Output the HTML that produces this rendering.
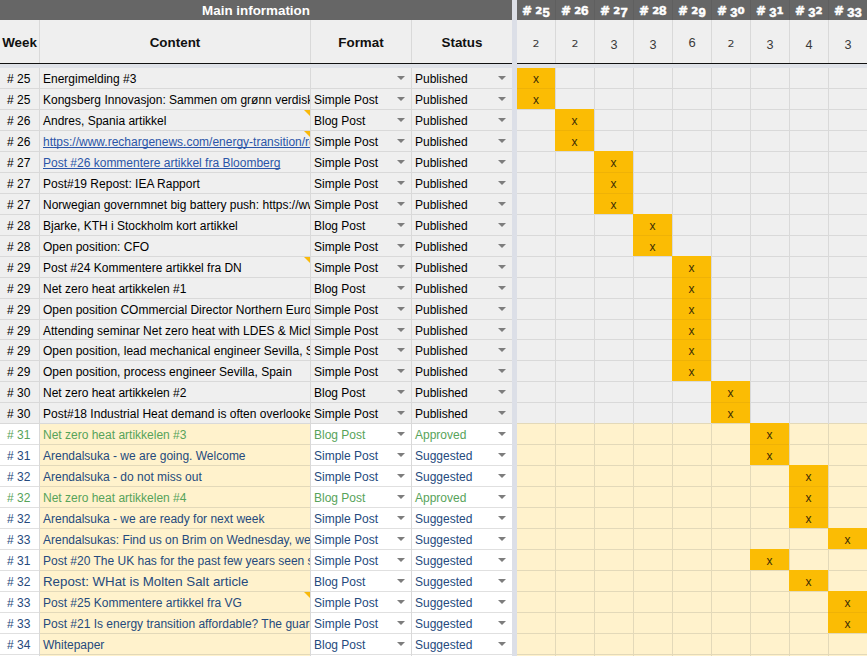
<!DOCTYPE html><html><head><meta charset="utf-8"><title>Content plan</title><style>
*{box-sizing:border-box;margin:0;padding:0}
html,body{width:867px;height:656px;overflow:hidden;background:#efefef}
body{font-family:"Liberation Sans",Arial,sans-serif;font-size:12px;color:#000;position:relative}
.a{position:absolute;white-space:nowrap;overflow:hidden}
.h1{background:#666;color:#fff;font-weight:bold;font-size:13.4px;text-align:center;line-height:22px;top:0;height:20px}
.wk{position:absolute;top:0;height:20px;width:30px;color:#fff;font-weight:bold}
.wk span{-webkit-text-stroke:.5px #fff;position:absolute;white-space:nowrap;line-height:1;transform-origin:0 0}
.h2{background:#efefef;font-weight:bold;font-size:13.4px;text-align:center;line-height:45px;top:20px;height:43px;color:#111}
.cnt{position:absolute;text-align:center;width:38px;color:#3a3a3a;white-space:nowrap;line-height:1}
.vl{position:absolute;width:1px;background:#d9d9d9}
.hl{position:absolute;height:1px;background:#d9d9d9}
.c{line-height:22px;height:20px}
.k{color:#000}.g{color:#57a35a}.b,.B{color:#254a7d}.l{color:#2a55a8;text-decoration:underline;text-decoration-skip-ink:none}
.B{font-size:13.3px}
.x{background:#fbbc04;text-align:center;color:#3b2d05;line-height:22px;font-size:12px}
.tri{position:absolute;width:0;height:0;border-left:6px solid transparent;border-top:6px solid #f9b90a}
.dd{position:absolute;width:0;height:0;border-left:4px solid transparent;border-right:4px solid transparent;border-top:4px solid #7d7d7d}
</style></head><body>
<div class="a h1" style="left:0;width:512px">Main information</div>
<div class="a" style="left:517px;top:0;width:350px;height:20px;background:#666"></div>
<div class="wk" style="left:522px"><span style="left:-0.1px;top:4.8px;font-family:'DejaVu Sans',sans-serif;font-size:12px;transform:scale(1,.97)">#</span><span style="left:13.2px;top:6.7px;font-family:'DejaVu Sans',sans-serif;font-size:10.2px;transform:scale(1,.92)">2</span><span style="left:20.4px;top:5.7px;font-size:13px;transform:scale(1,.98)">5</span></div>
<div class="wk" style="left:561px"><span style="left:-0.1px;top:4.8px;font-family:'DejaVu Sans',sans-serif;font-size:12px;transform:scale(1,.97)">#</span><span style="left:13.2px;top:6.7px;font-family:'DejaVu Sans',sans-serif;font-size:10.2px;transform:scale(1,.92)">2</span><span style="left:20.4px;top:3.6px;font-size:13.2px;transform:scale(1.02,.99)">6</span></div>
<div class="wk" style="left:600px"><span style="left:-0.1px;top:4.8px;font-family:'DejaVu Sans',sans-serif;font-size:12px;transform:scale(1,.97)">#</span><span style="left:13.2px;top:6.7px;font-family:'DejaVu Sans',sans-serif;font-size:10.2px;transform:scale(1,.92)">2</span><span style="left:20.4px;top:5.7px;font-size:13px;transform:scale(1,.98)">7</span></div>
<div class="wk" style="left:639px"><span style="left:-0.1px;top:4.8px;font-family:'DejaVu Sans',sans-serif;font-size:12px;transform:scale(1,.97)">#</span><span style="left:13.2px;top:6.7px;font-family:'DejaVu Sans',sans-serif;font-size:10.2px;transform:scale(1,.92)">2</span><span style="left:20.4px;top:3.6px;font-size:13.2px;transform:scale(1.02,.99)">8</span></div>
<div class="wk" style="left:678px"><span style="left:-0.1px;top:4.8px;font-family:'DejaVu Sans',sans-serif;font-size:12px;transform:scale(1,.97)">#</span><span style="left:13.2px;top:6.7px;font-family:'DejaVu Sans',sans-serif;font-size:10.2px;transform:scale(1,.92)">2</span><span style="left:20.4px;top:5.7px;font-size:13px;transform:scale(1,.98)">9</span></div>
<div class="wk" style="left:717px"><span style="left:-0.1px;top:4.8px;font-family:'DejaVu Sans',sans-serif;font-size:12px;transform:scale(1,.97)">#</span><span style="left:13.2px;top:5.7px;font-size:13px;transform:scale(1,.98)">3</span><span style="left:20.4px;top:6.7px;font-family:'DejaVu Sans',sans-serif;font-size:10.2px;transform:scale(1,.92)">0</span></div>
<div class="wk" style="left:756px"><span style="left:-0.1px;top:4.8px;font-family:'DejaVu Sans',sans-serif;font-size:12px;transform:scale(1,.97)">#</span><span style="left:13.2px;top:5.7px;font-size:13px;transform:scale(1,.98)">3</span><span style="left:20.4px;top:6.7px;font-family:'DejaVu Sans',sans-serif;font-size:10.2px;transform:scale(1,.92)">1</span></div>
<div class="wk" style="left:795px"><span style="left:-0.1px;top:4.8px;font-family:'DejaVu Sans',sans-serif;font-size:12px;transform:scale(1,.97)">#</span><span style="left:13.2px;top:5.7px;font-size:13px;transform:scale(1,.98)">3</span><span style="left:20.4px;top:6.7px;font-family:'DejaVu Sans',sans-serif;font-size:10.2px;transform:scale(1,.92)">2</span></div>
<div class="wk" style="left:834px"><span style="left:-0.1px;top:4.8px;font-family:'DejaVu Sans',sans-serif;font-size:12px;transform:scale(1,.97)">#</span><span style="left:13.2px;top:5.7px;font-size:13px;transform:scale(1,.98)">3</span><span style="left:20.4px;top:5.7px;font-size:13px;transform:scale(1,.98)">3</span></div>
<div class="a h2" style="left:0px;width:39px">Week</div>
<div class="a h2" style="left:40px;width:270px">Content</div>
<div class="a h2" style="left:311px;width:100px">Format</div>
<div class="a h2" style="left:412px;width:100px">Status</div>
<div class="cnt" style="left:517px;top:38.6px;font-family:'DejaVu Sans',sans-serif;font-size:10px;transform:scale(1.1,.95)">2</div>
<div class="cnt" style="left:556px;top:38.6px;font-family:'DejaVu Sans',sans-serif;font-size:10px;transform:scale(1.1,.95)">2</div>
<div class="cnt" style="left:595px;top:39.2px;font-size:12.6px">3</div>
<div class="cnt" style="left:634px;top:39.2px;font-size:12.6px">3</div>
<div class="cnt" style="left:673px;top:35.6px;font-size:13px">6</div>
<div class="cnt" style="left:712px;top:38.6px;font-family:'DejaVu Sans',sans-serif;font-size:10px;transform:scale(1.1,.95)">2</div>
<div class="cnt" style="left:751px;top:39.2px;font-size:12.6px">3</div>
<div class="cnt" style="left:790px;top:39.2px;font-size:12.6px">4</div>
<div class="cnt" style="left:829px;top:39.2px;font-size:12.6px">3</div>
<div class="a" style="left:0;top:424px;width:39px;height:232px;background:#fff"></div>
<div class="a" style="left:40px;top:424px;width:271px;height:232px;background:#fff2cc"></div>
<div class="a" style="left:311px;top:424px;width:201px;height:232px;background:#fff"></div>
<div class="a" style="left:517px;top:424px;width:350px;height:232px;background:#fff2cc"></div>
<div class="hl" style="left:0;top:88px;width:867px"></div>
<div class="hl" style="left:0;top:109px;width:867px"></div>
<div class="hl" style="left:0;top:130px;width:867px"></div>
<div class="hl" style="left:0;top:151px;width:867px"></div>
<div class="hl" style="left:0;top:172px;width:867px"></div>
<div class="hl" style="left:0;top:193px;width:867px"></div>
<div class="hl" style="left:0;top:214px;width:867px"></div>
<div class="hl" style="left:0;top:235px;width:867px"></div>
<div class="hl" style="left:0;top:256px;width:867px"></div>
<div class="hl" style="left:0;top:277px;width:867px"></div>
<div class="hl" style="left:0;top:298px;width:867px"></div>
<div class="hl" style="left:0;top:319px;width:867px"></div>
<div class="hl" style="left:0;top:339px;width:867px"></div>
<div class="hl" style="left:0;top:360px;width:867px"></div>
<div class="hl" style="left:0;top:381px;width:867px"></div>
<div class="hl" style="left:0;top:402px;width:867px"></div>
<div class="hl" style="left:0;top:423px;width:512px"></div>
<div class="hl" style="left:517px;top:423px;width:350px;background:#e3d9b9"></div>
<div class="hl" style="left:0;top:444px;width:39px;background:#e0e0e0"></div>
<div class="hl" style="left:40px;top:444px;width:270px;background:#e3d9b9"></div>
<div class="hl" style="left:311px;top:444px;width:201px;background:#e0e0e0"></div>
<div class="hl" style="left:517px;top:444px;width:350px;background:#e3d9b9"></div>
<div class="hl" style="left:0;top:465px;width:39px;background:#e0e0e0"></div>
<div class="hl" style="left:40px;top:465px;width:270px;background:#e3d9b9"></div>
<div class="hl" style="left:311px;top:465px;width:201px;background:#e0e0e0"></div>
<div class="hl" style="left:517px;top:465px;width:350px;background:#e3d9b9"></div>
<div class="hl" style="left:0;top:486px;width:39px;background:#e0e0e0"></div>
<div class="hl" style="left:40px;top:486px;width:270px;background:#e3d9b9"></div>
<div class="hl" style="left:311px;top:486px;width:201px;background:#e0e0e0"></div>
<div class="hl" style="left:517px;top:486px;width:350px;background:#e3d9b9"></div>
<div class="hl" style="left:0;top:507px;width:39px;background:#e0e0e0"></div>
<div class="hl" style="left:40px;top:507px;width:270px;background:#e3d9b9"></div>
<div class="hl" style="left:311px;top:507px;width:201px;background:#e0e0e0"></div>
<div class="hl" style="left:517px;top:507px;width:350px;background:#e3d9b9"></div>
<div class="hl" style="left:0;top:528px;width:39px;background:#e0e0e0"></div>
<div class="hl" style="left:40px;top:528px;width:270px;background:#e3d9b9"></div>
<div class="hl" style="left:311px;top:528px;width:201px;background:#e0e0e0"></div>
<div class="hl" style="left:517px;top:528px;width:350px;background:#e3d9b9"></div>
<div class="hl" style="left:0;top:549px;width:39px;background:#e0e0e0"></div>
<div class="hl" style="left:40px;top:549px;width:270px;background:#e3d9b9"></div>
<div class="hl" style="left:311px;top:549px;width:201px;background:#e0e0e0"></div>
<div class="hl" style="left:517px;top:549px;width:350px;background:#e3d9b9"></div>
<div class="hl" style="left:0;top:570px;width:39px;background:#e0e0e0"></div>
<div class="hl" style="left:40px;top:570px;width:270px;background:#e3d9b9"></div>
<div class="hl" style="left:311px;top:570px;width:201px;background:#e0e0e0"></div>
<div class="hl" style="left:517px;top:570px;width:350px;background:#e3d9b9"></div>
<div class="hl" style="left:0;top:591px;width:39px;background:#e0e0e0"></div>
<div class="hl" style="left:40px;top:591px;width:270px;background:#e3d9b9"></div>
<div class="hl" style="left:311px;top:591px;width:201px;background:#e0e0e0"></div>
<div class="hl" style="left:517px;top:591px;width:350px;background:#e3d9b9"></div>
<div class="hl" style="left:0;top:612px;width:39px;background:#e0e0e0"></div>
<div class="hl" style="left:40px;top:612px;width:270px;background:#e3d9b9"></div>
<div class="hl" style="left:311px;top:612px;width:201px;background:#e0e0e0"></div>
<div class="hl" style="left:517px;top:612px;width:350px;background:#e3d9b9"></div>
<div class="hl" style="left:0;top:633px;width:39px;background:#e0e0e0"></div>
<div class="hl" style="left:40px;top:633px;width:270px;background:#e3d9b9"></div>
<div class="hl" style="left:311px;top:633px;width:201px;background:#e0e0e0"></div>
<div class="hl" style="left:517px;top:633px;width:350px;background:#e3d9b9"></div>
<div class="hl" style="left:0;top:654px;width:39px;background:#e0e0e0"></div>
<div class="hl" style="left:40px;top:654px;width:270px;background:#e3d9b9"></div>
<div class="hl" style="left:311px;top:654px;width:201px;background:#e0e0e0"></div>
<div class="hl" style="left:517px;top:654px;width:350px;background:#e3d9b9"></div>
<div class="vl" style="left:39px;top:20px;height:636px"></div>
<div class="vl" style="left:310px;top:20px;height:636px"></div>
<div class="vl" style="left:411px;top:20px;height:636px"></div>
<div class="vl" style="left:555px;top:0;height:20px;background:#5f5f5f"></div>
<div class="vl" style="left:555px;top:20px;height:404px"></div>
<div class="vl" style="left:555px;top:424px;height:232px;background:#e3d9b9"></div>
<div class="vl" style="left:594px;top:0;height:20px;background:#5f5f5f"></div>
<div class="vl" style="left:594px;top:20px;height:404px"></div>
<div class="vl" style="left:594px;top:424px;height:232px;background:#e3d9b9"></div>
<div class="vl" style="left:633px;top:0;height:20px;background:#5f5f5f"></div>
<div class="vl" style="left:633px;top:20px;height:404px"></div>
<div class="vl" style="left:633px;top:424px;height:232px;background:#e3d9b9"></div>
<div class="vl" style="left:672px;top:0;height:20px;background:#5f5f5f"></div>
<div class="vl" style="left:672px;top:20px;height:404px"></div>
<div class="vl" style="left:672px;top:424px;height:232px;background:#e3d9b9"></div>
<div class="vl" style="left:711px;top:0;height:20px;background:#5f5f5f"></div>
<div class="vl" style="left:711px;top:20px;height:404px"></div>
<div class="vl" style="left:711px;top:424px;height:232px;background:#e3d9b9"></div>
<div class="vl" style="left:750px;top:0;height:20px;background:#5f5f5f"></div>
<div class="vl" style="left:750px;top:20px;height:404px"></div>
<div class="vl" style="left:750px;top:424px;height:232px;background:#e3d9b9"></div>
<div class="vl" style="left:789px;top:0;height:20px;background:#5f5f5f"></div>
<div class="vl" style="left:789px;top:20px;height:404px"></div>
<div class="vl" style="left:789px;top:424px;height:232px;background:#e3d9b9"></div>
<div class="vl" style="left:828px;top:0;height:20px;background:#5f5f5f"></div>
<div class="vl" style="left:828px;top:20px;height:404px"></div>
<div class="vl" style="left:828px;top:424px;height:232px;background:#e3d9b9"></div>
<div class="a" style="left:0;top:63px;width:867px;height:1px;background:#111"></div>
<div class="a" style="left:0;top:64px;width:867px;height:4px;background:#dfe2e8"></div>
<div class="a" style="left:512px;top:0;width:5px;height:656px;background:#dcdfe7"></div>
<div class="a c k" style="left:0;top:68px;width:39px;padding-left:7px"># 25</div>
<div class="a c k" style="left:40px;top:68px;width:270px;padding-left:3px">Energimelding #3</div>
<div class="dd" style="left:397px;top:76px"></div>
<div class="a c k" style="left:412px;top:68px;width:84px;padding-left:3px">Published</div>
<div class="dd" style="left:498px;top:76px"></div>
<div class="a x" style="left:517px;top:68px;width:38px;height:20px;">x</div>
<div class="a c k" style="left:0;top:89px;width:39px;padding-left:7px"># 25</div>
<div class="a c k" style="left:40px;top:89px;width:270px;padding-left:3px">Kongsberg Innovasjon: Sammen om grønn verdiskaping</div>
<div class="a c k" style="left:311px;top:89px;width:84px;padding-left:3px">Simple Post</div>
<div class="dd" style="left:397px;top:97px"></div>
<div class="a c k" style="left:412px;top:89px;width:84px;padding-left:3px">Published</div>
<div class="dd" style="left:498px;top:97px"></div>
<div class="a x" style="left:517px;top:88px;width:38px;height:21px;border-top:1px solid #efb206;">x</div>
<div class="a c k" style="left:0;top:110px;width:39px;padding-left:7px"># 26</div>
<div class="a c k" style="left:40px;top:110px;width:270px;padding-left:3px">Andres, Spania artikkel</div>
<div class="a c k" style="left:311px;top:110px;width:84px;padding-left:3px">Blog Post</div>
<div class="dd" style="left:397px;top:118px"></div>
<div class="a c k" style="left:412px;top:110px;width:84px;padding-left:3px">Published</div>
<div class="dd" style="left:498px;top:118px"></div>
<div class="tri" style="left:304px;top:110px"></div>
<div class="a x" style="left:555px;top:109px;width:39px;height:21px;padding-top:1px;">x</div>
<div class="a c k" style="left:0;top:131px;width:39px;padding-left:7px"># 26</div>
<div class="a c l" style="left:40px;top:131px;width:270px;padding-left:3px">https://www.rechargenews.com/energy-transition/renewables</div>
<div class="a c k" style="left:311px;top:131px;width:84px;padding-left:3px">Simple Post</div>
<div class="dd" style="left:397px;top:139px"></div>
<div class="a c k" style="left:412px;top:131px;width:84px;padding-left:3px">Published</div>
<div class="dd" style="left:498px;top:139px"></div>
<div class="tri" style="left:304px;top:131px"></div>
<div class="a x" style="left:555px;top:130px;width:39px;height:21px;border-top:1px solid #efb206;">x</div>
<div class="a c k" style="left:0;top:152px;width:39px;padding-left:7px"># 27</div>
<div class="a c l" style="left:40px;top:152px;width:270px;padding-left:3px">Post #26 kommentere artikkel fra Bloomberg</div>
<div class="a c k" style="left:311px;top:152px;width:84px;padding-left:3px">Simple Post</div>
<div class="dd" style="left:397px;top:160px"></div>
<div class="a c k" style="left:412px;top:152px;width:84px;padding-left:3px">Published</div>
<div class="dd" style="left:498px;top:160px"></div>
<div class="a x" style="left:594px;top:151px;width:39px;height:21px;padding-top:1px;">x</div>
<div class="a c k" style="left:0;top:173px;width:39px;padding-left:7px"># 27</div>
<div class="a c k" style="left:40px;top:173px;width:270px;padding-left:3px">Post#19 Repost: IEA Rapport</div>
<div class="a c k" style="left:311px;top:173px;width:84px;padding-left:3px">Simple Post</div>
<div class="dd" style="left:397px;top:181px"></div>
<div class="a c k" style="left:412px;top:173px;width:84px;padding-left:3px">Published</div>
<div class="dd" style="left:498px;top:181px"></div>
<div class="a x" style="left:594px;top:172px;width:39px;height:21px;border-top:1px solid #efb206;">x</div>
<div class="a c k" style="left:0;top:194px;width:39px;padding-left:7px"># 27</div>
<div class="a c k" style="left:40px;top:194px;width:270px;padding-left:3px">Norwegian governmnet big battery push: https://www.energy</div>
<div class="a c k" style="left:311px;top:194px;width:84px;padding-left:3px">Simple Post</div>
<div class="dd" style="left:397px;top:202px"></div>
<div class="a c k" style="left:412px;top:194px;width:84px;padding-left:3px">Published</div>
<div class="dd" style="left:498px;top:202px"></div>
<div class="a x" style="left:594px;top:193px;width:39px;height:21px;border-top:1px solid #efb206;">x</div>
<div class="a c k" style="left:0;top:215px;width:39px;padding-left:7px"># 28</div>
<div class="a c k" style="left:40px;top:215px;width:270px;padding-left:3px">Bjarke, KTH i Stockholm kort artikkel</div>
<div class="a c k" style="left:311px;top:215px;width:84px;padding-left:3px">Blog Post</div>
<div class="dd" style="left:397px;top:223px"></div>
<div class="a c k" style="left:412px;top:215px;width:84px;padding-left:3px">Published</div>
<div class="dd" style="left:498px;top:223px"></div>
<div class="a x" style="left:633px;top:214px;width:39px;height:21px;padding-top:1px;">x</div>
<div class="a c k" style="left:0;top:236px;width:39px;padding-left:7px"># 28</div>
<div class="a c k" style="left:40px;top:236px;width:270px;padding-left:3px">Open position: CFO</div>
<div class="a c k" style="left:311px;top:236px;width:84px;padding-left:3px">Simple Post</div>
<div class="dd" style="left:397px;top:244px"></div>
<div class="a c k" style="left:412px;top:236px;width:84px;padding-left:3px">Published</div>
<div class="dd" style="left:498px;top:244px"></div>
<div class="a x" style="left:633px;top:235px;width:39px;height:21px;border-top:1px solid #efb206;">x</div>
<div class="a c k" style="left:0;top:257px;width:39px;padding-left:7px"># 29</div>
<div class="a c k" style="left:40px;top:257px;width:270px;padding-left:3px">Post #24 Kommentere artikkel fra DN</div>
<div class="a c k" style="left:311px;top:257px;width:84px;padding-left:3px">Simple Post</div>
<div class="dd" style="left:397px;top:265px"></div>
<div class="a c k" style="left:412px;top:257px;width:84px;padding-left:3px">Published</div>
<div class="dd" style="left:498px;top:265px"></div>
<div class="tri" style="left:304px;top:257px"></div>
<div class="a x" style="left:672px;top:256px;width:39px;height:21px;padding-top:1px;">x</div>
<div class="a c k" style="left:0;top:278px;width:39px;padding-left:7px"># 29</div>
<div class="a c k" style="left:40px;top:278px;width:270px;padding-left:3px">Net zero heat artikkelen #1</div>
<div class="a c k" style="left:311px;top:278px;width:84px;padding-left:3px">Blog Post</div>
<div class="dd" style="left:397px;top:286px"></div>
<div class="a c k" style="left:412px;top:278px;width:84px;padding-left:3px">Published</div>
<div class="dd" style="left:498px;top:286px"></div>
<div class="a x" style="left:672px;top:277px;width:39px;height:21px;border-top:1px solid #efb206;">x</div>
<div class="a c k" style="left:0;top:299px;width:39px;padding-left:7px"># 29</div>
<div class="a c k" style="left:40px;top:299px;width:270px;padding-left:3px">Open position COmmercial Director Northern Europe</div>
<div class="a c k" style="left:311px;top:299px;width:84px;padding-left:3px">Simple Post</div>
<div class="dd" style="left:397px;top:307px"></div>
<div class="a c k" style="left:412px;top:299px;width:84px;padding-left:3px">Published</div>
<div class="dd" style="left:498px;top:307px"></div>
<div class="a x" style="left:672px;top:298px;width:39px;height:21px;border-top:1px solid #efb206;">x</div>
<div class="a c k" style="left:0;top:320px;width:39px;padding-left:7px"># 29</div>
<div class="a c k" style="left:40px;top:320px;width:270px;padding-left:3px">Attending seminar Net zero heat with LDES &amp; Michael</div>
<div class="a c k" style="left:311px;top:320px;width:84px;padding-left:3px">Simple Post</div>
<div class="dd" style="left:397px;top:328px"></div>
<div class="a c k" style="left:412px;top:320px;width:84px;padding-left:3px">Published</div>
<div class="dd" style="left:498px;top:328px"></div>
<div class="a x" style="left:672px;top:319px;width:39px;height:20px;border-top:1px solid #efb206;">x</div>
<div class="a c k" style="left:0;top:340px;width:39px;padding-left:7px"># 29</div>
<div class="a c k" style="left:40px;top:340px;width:270px;padding-left:3px">Open position, lead mechanical engineer Sevilla, Spain</div>
<div class="a c k" style="left:311px;top:340px;width:84px;padding-left:3px">Simple Post</div>
<div class="dd" style="left:397px;top:348px"></div>
<div class="a c k" style="left:412px;top:340px;width:84px;padding-left:3px">Published</div>
<div class="dd" style="left:498px;top:348px"></div>
<div class="a x" style="left:672px;top:339px;width:39px;height:21px;border-top:1px solid #efb206;">x</div>
<div class="a c k" style="left:0;top:361px;width:39px;padding-left:7px"># 29</div>
<div class="a c k" style="left:40px;top:361px;width:270px;padding-left:3px">Open position, process engineer Sevilla, Spain</div>
<div class="a c k" style="left:311px;top:361px;width:84px;padding-left:3px">Simple Post</div>
<div class="dd" style="left:397px;top:369px"></div>
<div class="a c k" style="left:412px;top:361px;width:84px;padding-left:3px">Published</div>
<div class="dd" style="left:498px;top:369px"></div>
<div class="a x" style="left:672px;top:360px;width:39px;height:21px;border-top:1px solid #efb206;">x</div>
<div class="a c k" style="left:0;top:382px;width:39px;padding-left:7px"># 30</div>
<div class="a c k" style="left:40px;top:382px;width:270px;padding-left:3px">Net zero heat artikkelen #2</div>
<div class="a c k" style="left:311px;top:382px;width:84px;padding-left:3px">Blog Post</div>
<div class="dd" style="left:397px;top:390px"></div>
<div class="a c k" style="left:412px;top:382px;width:84px;padding-left:3px">Published</div>
<div class="dd" style="left:498px;top:390px"></div>
<div class="a x" style="left:711px;top:381px;width:39px;height:21px;padding-top:1px;">x</div>
<div class="a c k" style="left:0;top:403px;width:39px;padding-left:7px"># 30</div>
<div class="a c k" style="left:40px;top:403px;width:270px;padding-left:3px">Post#18 Industrial Heat demand is often overlooked</div>
<div class="a c k" style="left:311px;top:403px;width:84px;padding-left:3px">Simple Post</div>
<div class="dd" style="left:397px;top:411px"></div>
<div class="a c k" style="left:412px;top:403px;width:84px;padding-left:3px">Published</div>
<div class="dd" style="left:498px;top:411px"></div>
<div class="a x" style="left:711px;top:402px;width:39px;height:21px;border-top:1px solid #efb206;">x</div>
<div class="a c g" style="left:0;top:424px;width:39px;padding-left:7px"># 31</div>
<div class="a c g" style="left:40px;top:424px;width:270px;padding-left:3px">Net zero heat artikkelen #3</div>
<div class="a c g" style="left:311px;top:424px;width:84px;padding-left:3px">Blog Post</div>
<div class="dd" style="left:397px;top:432px"></div>
<div class="a c g" style="left:412px;top:424px;width:84px;padding-left:3px">Approved</div>
<div class="dd" style="left:498px;top:432px"></div>
<div class="a x" style="left:750px;top:423px;width:39px;height:21px;padding-top:1px;">x</div>
<div class="a c b" style="left:0;top:445px;width:39px;padding-left:7px"># 31</div>
<div class="a c b" style="left:40px;top:445px;width:270px;padding-left:3px">Arendalsuka - we are going. Welcome</div>
<div class="a c b" style="left:311px;top:445px;width:84px;padding-left:3px">Simple Post</div>
<div class="dd" style="left:397px;top:453px"></div>
<div class="a c b" style="left:412px;top:445px;width:84px;padding-left:3px">Suggested</div>
<div class="dd" style="left:498px;top:453px"></div>
<div class="a x" style="left:750px;top:444px;width:39px;height:21px;border-top:1px solid #efb206;">x</div>
<div class="a c b" style="left:0;top:466px;width:39px;padding-left:7px"># 32</div>
<div class="a c b" style="left:40px;top:466px;width:270px;padding-left:3px">Arendalsuka - do not miss out</div>
<div class="a c b" style="left:311px;top:466px;width:84px;padding-left:3px">Simple Post</div>
<div class="dd" style="left:397px;top:474px"></div>
<div class="a c b" style="left:412px;top:466px;width:84px;padding-left:3px">Suggested</div>
<div class="dd" style="left:498px;top:474px"></div>
<div class="a x" style="left:789px;top:465px;width:39px;height:21px;padding-top:1px;">x</div>
<div class="a c g" style="left:0;top:487px;width:39px;padding-left:7px"># 32</div>
<div class="a c g" style="left:40px;top:487px;width:270px;padding-left:3px">Net zero heat artikkelen #4</div>
<div class="a c g" style="left:311px;top:487px;width:84px;padding-left:3px">Blog Post</div>
<div class="dd" style="left:397px;top:495px"></div>
<div class="a c g" style="left:412px;top:487px;width:84px;padding-left:3px">Approved</div>
<div class="dd" style="left:498px;top:495px"></div>
<div class="a x" style="left:789px;top:486px;width:39px;height:21px;border-top:1px solid #efb206;">x</div>
<div class="a c b" style="left:0;top:508px;width:39px;padding-left:7px"># 32</div>
<div class="a c b" style="left:40px;top:508px;width:270px;padding-left:3px">Arendalsuka - we are ready for next week</div>
<div class="a c b" style="left:311px;top:508px;width:84px;padding-left:3px">Simple Post</div>
<div class="dd" style="left:397px;top:516px"></div>
<div class="a c b" style="left:412px;top:508px;width:84px;padding-left:3px">Suggested</div>
<div class="dd" style="left:498px;top:516px"></div>
<div class="a x" style="left:789px;top:507px;width:39px;height:21px;border-top:1px solid #efb206;">x</div>
<div class="a c b" style="left:0;top:529px;width:39px;padding-left:7px"># 33</div>
<div class="a c b" style="left:40px;top:529px;width:270px;padding-left:3px">Arendalsukas: Find us on Brim on Wednesday, we are</div>
<div class="a c b" style="left:311px;top:529px;width:84px;padding-left:3px">Simple Post</div>
<div class="dd" style="left:397px;top:537px"></div>
<div class="a c b" style="left:412px;top:529px;width:84px;padding-left:3px">Suggested</div>
<div class="dd" style="left:498px;top:537px"></div>
<div class="a x" style="left:828px;top:528px;width:39px;height:21px;padding-top:1px;">x</div>
<div class="a c b" style="left:0;top:550px;width:39px;padding-left:7px"># 31</div>
<div class="a c b" style="left:40px;top:550px;width:270px;padding-left:3px">Post #20 The UK has for the past few years seen soaring</div>
<div class="a c b" style="left:311px;top:550px;width:84px;padding-left:3px">Simple Post</div>
<div class="dd" style="left:397px;top:558px"></div>
<div class="a c b" style="left:412px;top:550px;width:84px;padding-left:3px">Suggested</div>
<div class="dd" style="left:498px;top:558px"></div>
<div class="a x" style="left:750px;top:549px;width:39px;height:21px;padding-top:1px;">x</div>
<div class="a c b" style="left:0;top:571px;width:39px;padding-left:7px"># 32</div>
<div class="a c B" style="left:40px;top:571px;width:270px;padding-left:3px">Repost: WHat is Molten Salt article</div>
<div class="a c b" style="left:311px;top:571px;width:84px;padding-left:3px">Blog Post</div>
<div class="dd" style="left:397px;top:579px"></div>
<div class="a c b" style="left:412px;top:571px;width:84px;padding-left:3px">Suggested</div>
<div class="dd" style="left:498px;top:579px"></div>
<div class="a x" style="left:789px;top:570px;width:39px;height:21px;padding-top:1px;">x</div>
<div class="a c b" style="left:0;top:592px;width:39px;padding-left:7px"># 33</div>
<div class="a c b" style="left:40px;top:592px;width:270px;padding-left:3px">Post #25 Kommentere artikkel fra VG</div>
<div class="a c b" style="left:311px;top:592px;width:84px;padding-left:3px">Simple Post</div>
<div class="dd" style="left:397px;top:600px"></div>
<div class="a c b" style="left:412px;top:592px;width:84px;padding-left:3px">Suggested</div>
<div class="dd" style="left:498px;top:600px"></div>
<div class="tri" style="left:304px;top:592px"></div>
<div class="a x" style="left:828px;top:591px;width:39px;height:21px;padding-top:1px;">x</div>
<div class="a c b" style="left:0;top:613px;width:39px;padding-left:7px"># 33</div>
<div class="a c b" style="left:40px;top:613px;width:270px;padding-left:3px">Post #21 Is energy transition affordable? The guardian</div>
<div class="a c b" style="left:311px;top:613px;width:84px;padding-left:3px">Simple Post</div>
<div class="dd" style="left:397px;top:621px"></div>
<div class="a c b" style="left:412px;top:613px;width:84px;padding-left:3px">Suggested</div>
<div class="dd" style="left:498px;top:621px"></div>
<div class="a x" style="left:828px;top:612px;width:39px;height:21px;border-top:1px solid #efb206;">x</div>
<div class="a c b" style="left:0;top:634px;width:39px;padding-left:7px"># 34</div>
<div class="a c b" style="left:40px;top:634px;width:270px;padding-left:3px">Whitepaper</div>
<div class="a c b" style="left:311px;top:634px;width:84px;padding-left:3px">Blog Post</div>
<div class="dd" style="left:397px;top:642px"></div>
<div class="a c b" style="left:412px;top:634px;width:84px;padding-left:3px">Suggested</div>
<div class="dd" style="left:498px;top:642px"></div>
</body></html>
